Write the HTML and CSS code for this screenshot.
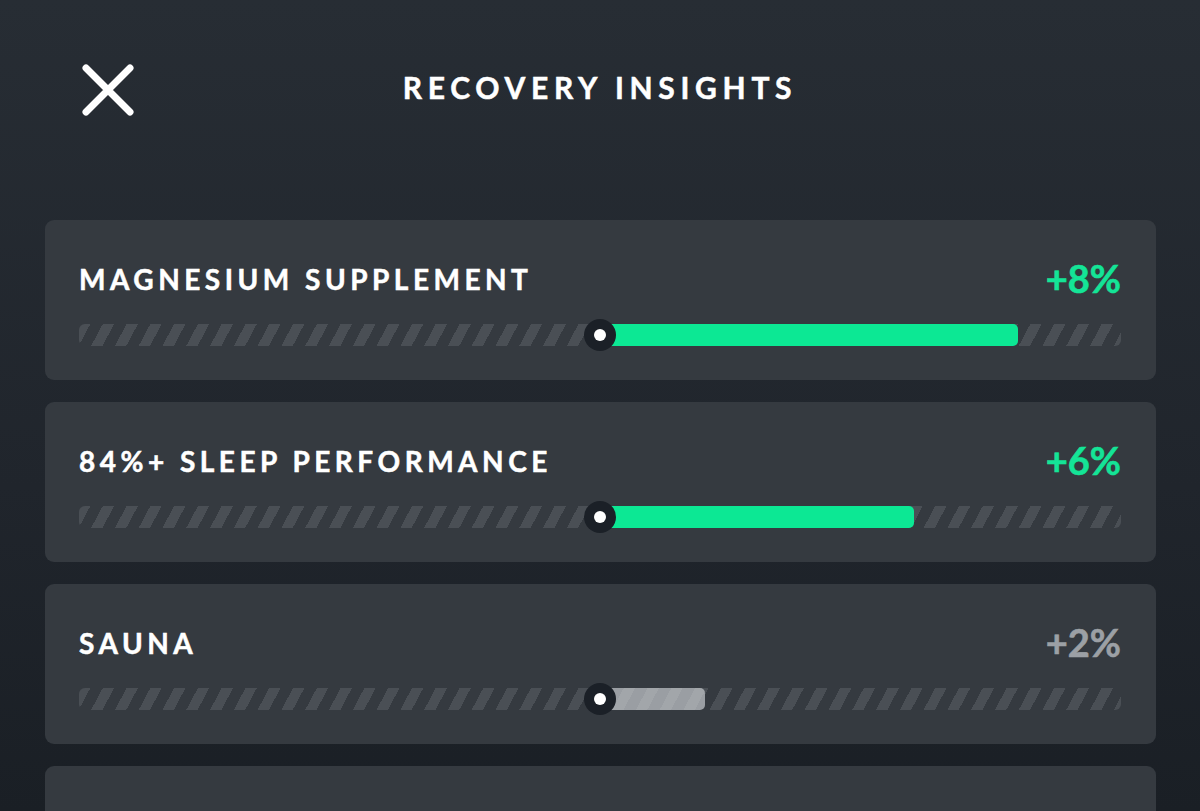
FILE: index.html
```html
<!DOCTYPE html>
<html lang="en">
<head>
  <meta charset="UTF-8">
  <meta name="viewport" content="width=device-width, initial-scale=1.0">
  <title>Recovery Insights</title>
  <link rel="stylesheet" href="styles.css">
</head>
<body>
  <div class="screen">
    <header class="top-bar">
      <button class="close-btn" aria-label="Close">
        <svg width="52" height="52" viewBox="0 0 52 52">
          <path d="M4 4 L48 48 M48 4 L4 48" stroke="#fff" stroke-width="7" stroke-linecap="round" fill="none"/>
        </svg>
      </button>
      <h1 class="title">RECOVERY INSIGHTS</h1>
    </header>

    <div class="insights">
      <div class="insight">
        <div class="insight-head">
          <span class="insight-name">MAGNESIUM SUPPLEMENT</span>
          <span class="insight-value positive">+8%</span>
        </div>
        <div class="track">
          <div class="fill positive" style="width: 418px"></div>
          <span class="knob"></span>
        </div>
      </div>

      <div class="insight">
        <div class="insight-head">
          <span class="insight-name">84%+ SLEEP PERFORMANCE</span>
          <span class="insight-value positive">+6%</span>
        </div>
        <div class="track">
          <div class="fill positive" style="width: 314px"></div>
          <span class="knob"></span>
        </div>
      </div>

      <div class="insight">
        <div class="insight-head">
          <span class="insight-name">SAUNA</span>
          <span class="insight-value neutral">+2%</span>
        </div>
        <div class="track">
          <div class="fill neutral" style="width: 105px"></div>
          <span class="knob"></span>
        </div>
      </div>

      <div class="insight"></div>
    </div>
  </div>
</body>
</html>
```

FILE: styles.css
```css
body {
  margin: 0;
  font-family: "Lato", "Liberation Sans", sans-serif;
  color: #fff;
  background: linear-gradient(180deg, #272d34 0%, #20252c 60%, #1a1f25 100%);
  min-height: 100vh;
  overflow: hidden;
}

.screen {
  width: 1200px;
  height: 811px;
  overflow: hidden;
}

.top-bar {
  position: relative;
  height: 176px;
  display: flex;
  justify-content: center;
  align-items: flex-start;
}

.close-btn {
  position: absolute;
  left: 82px;
  top: 64px;
  padding: 0;
  background: none;
  border: none;
  cursor: pointer;
  line-height: 0;
}

.title {
  margin: 69px 0 0;
  font-size: 30px;
  line-height: 36px;
  font-weight: 700;
  letter-spacing: 5.7px;
  -webkit-text-stroke: 0.5px #fff;
}

.insights {
  margin-top: 44px;
  padding: 0 44px 0 45px;
  display: flex;
  flex-direction: column;
  gap: 22px;
}

.insight {
  height: 160px;
  box-sizing: border-box;
  padding: 45px 35px 0 34px;
  background: #353a40;
  border-radius: 9px;
}

.insight-head {
  display: flex;
  justify-content: space-between;
  align-items: flex-start;
  height: 28px;
}

.insight-name {
  font-size: 28px;
  line-height: 28px;
  font-weight: 700;
  letter-spacing: 4.5px;
  -webkit-text-stroke: 0.5px #fff;
}

.insight-value {
  margin-top: -6px;
  font-size: 38px;
  line-height: 38px;
  font-weight: 700;
  -webkit-text-stroke: 0.6px currentColor;
}

.insight-value.positive {
  color: #14e497;
}

.insight-value.neutral {
  color: #9ca0a5;
}

.track {
  position: relative;
  margin-top: 31px;
  height: 22px;
  border-radius: 6px;
  background: repeating-linear-gradient(118deg, #4a4f55 0 10px, transparent 10px 21px);
}

.fill {
  position: absolute;
  left: 50%;
  top: 0;
  bottom: 0;
  border-radius: 0 5px 5px 0;
}

.fill.positive {
  background: #0ce894;
}

.fill.neutral {
  background: repeating-linear-gradient(118deg, #a2a6aa 0 10px, #9a9ea3 10px 21px);
}

.knob {
  position: absolute;
  left: 50%;
  top: 50%;
  width: 32px;
  height: 32px;
  margin: -16px 0 0 -16px;
  border-radius: 50%;
  background: #1b2027;
}

.knob::after {
  content: "";
  position: absolute;
  left: 10px;
  top: 10px;
  width: 12px;
  height: 12px;
  border-radius: 50%;
  background: #fff;
}
```
